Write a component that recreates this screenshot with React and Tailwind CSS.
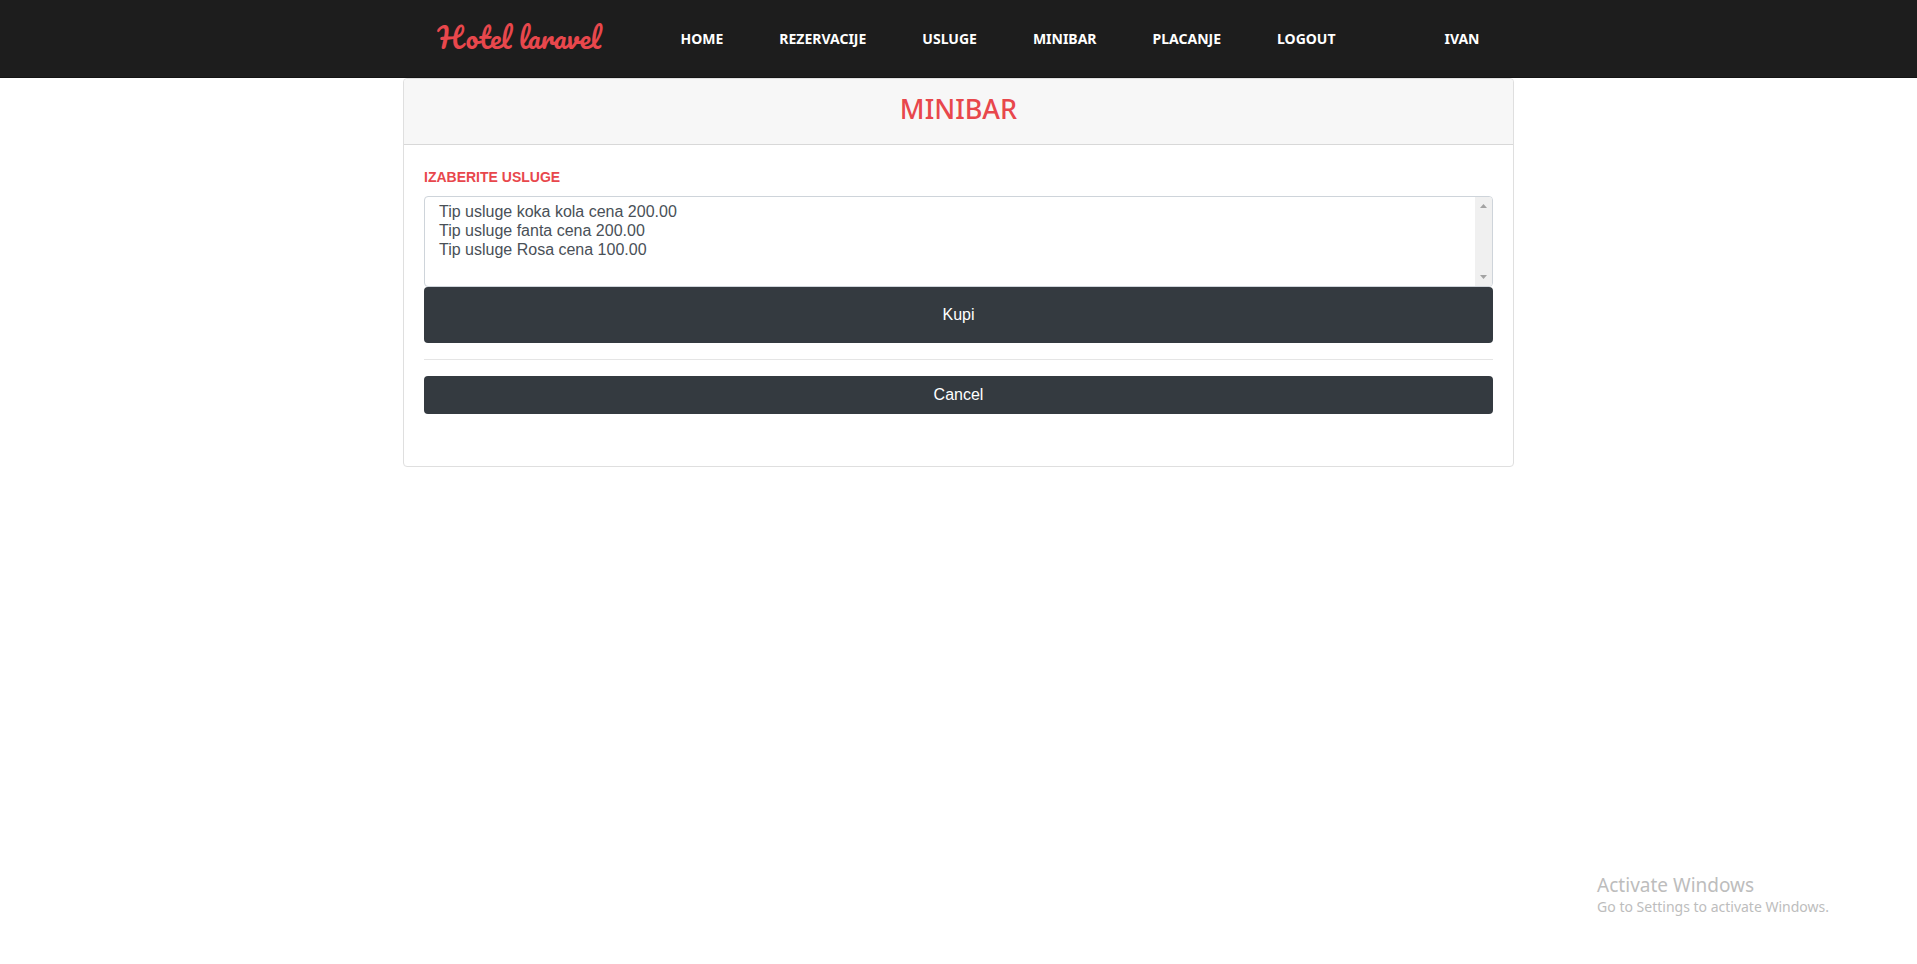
const navItems = ["Home", "Rezervacije", "Usluge", "Minibar", "Placanje", "Logout"];

const services = [
  { name: "koka kola", price: "200.00" },
  { name: "fanta", price: "200.00" },
  { name: "Rosa", price: "100.00" },
];

function Navbar() {
  return (
    <header className="border-b border-[#141414] bg-[#1d1d1d]">
      <div className="mx-auto flex h-[77px] max-w-[1110px] items-center px-[34px] font-['Noto_Sans',sans-serif]">
        <a
          href="#home"
          className="w-[214px] shrink-0 pb-0.5 whitespace-nowrap font-['Pacifico',cursive] text-[28px] leading-9 text-[#e8474c]"
        >
          Hotel laravel
        </a>
        <nav className="flex grow items-center justify-between text-sm font-bold text-white uppercase">
          <div className="flex gap-14 pl-[29px]">
            {navItems.map((item) => (
              <a key={item} href={`#${item.toLowerCase()}`}>
                {item}
              </a>
            ))}
          </div>
          <a href="#ivan">Ivan</a>
        </nav>
      </div>
    </header>
  );
}

function ScrollTrack() {
  return (
    <div
      aria-hidden="true"
      className="pointer-events-none absolute top-px right-px bottom-px flex w-[17px] flex-col items-center justify-between rounded-r-[3px] bg-[#f0f0f0] py-[7px]"
    >
      <svg width="7" height="4" viewBox="0 0 7 4" fill="#a3a3a3">
        <path d="M0 4L3.5 0L7 4Z" />
      </svg>
      <svg width="7" height="4" viewBox="0 0 7 4" fill="#a3a3a3">
        <path d="M0 0L3.5 4L7 0Z" />
      </svg>
    </div>
  );
}

export default function App() {
  return (
    <div className="flex min-h-screen flex-col bg-white font-['Liberation_Sans',Arial,sans-serif] text-base text-[#212529]">
      <Navbar />
      <main className="mx-auto w-full max-w-[1111px] rounded border border-[#dfdfdf]">
        <div className="rounded-t border-b border-[#d8d8d8] bg-[#f7f7f7] pt-[13px] pb-[18px]">
          <h1 className="text-center font-['Noto_Sans',sans-serif] text-[27px] leading-[34px] font-medium text-[#e8474c]">
            MINIBAR
          </h1>
        </div>
        <form className="px-5 pt-5 pb-[52px]" onSubmit={(e) => e.preventDefault()}>
          <label htmlFor="services" className="mb-[7px] block text-sm leading-6 font-bold text-[#e8474c] uppercase">
            Izaberite usluge
          </label>
          <div className="relative">
            <select
              id="services"
              multiple
              size={4}
              className="block h-[91px] w-full rounded border border-[#ced4da] bg-white px-3 py-1.5 text-[#495057]"
            >
              {services.map((s) => (
                <option key={s.name} className="h-[19px] px-[2px] py-0 leading-[19px]">
                  {`Tip usluge ${s.name} cena ${s.price}`}
                </option>
              ))}
            </select>
            <ScrollTrack />
          </div>
          <button type="submit" className="block h-14 w-full rounded bg-[#343a40] text-white">
            Kupi
          </button>
          <hr className="my-4 border-t border-[#e5e5e5]" />
          <button type="button" className="block h-[38px] w-full rounded bg-[#343a40] text-white">
            Cancel
          </button>
        </form>
      </main>
      <aside className="mt-auto mr-[88px] mb-[47px] self-end font-['Noto_Sans',sans-serif] text-[#bdbdbd]">
        <p className="text-[19px] leading-6">Activate Windows</p>
        <p className="text-sm leading-5">Go to Settings to activate Windows.</p>
      </aside>
    </div>
  );
}
